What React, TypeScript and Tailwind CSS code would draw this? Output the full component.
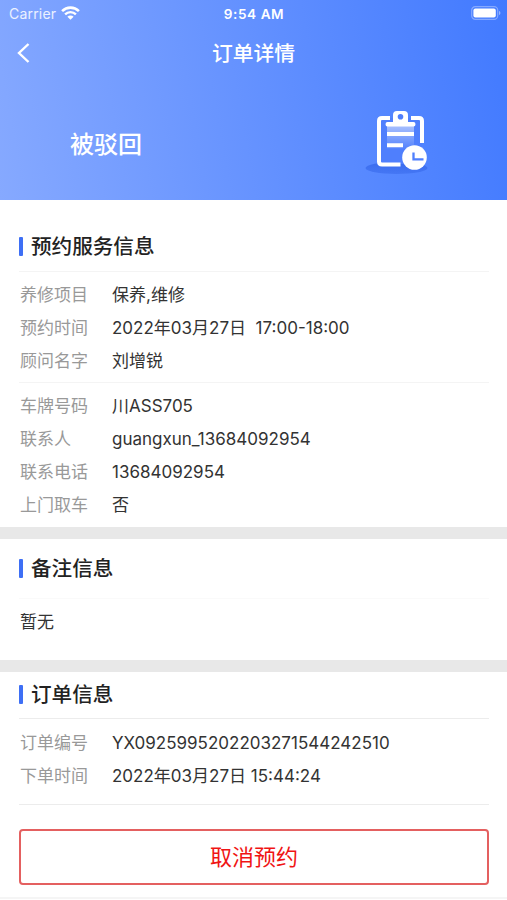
import React from 'react';

interface Row {
  label: string;
  value: string;
}

const serviceRows: Row[] = [
  { label: '养修项目', value: '保养,维修' },
  { label: '预约时间', value: '2022年03月27日  17:00-18:00' },
  { label: '顾问名字', value: '刘增锐' },
];

const contactRows: Row[] = [
  { label: '车牌号码', value: '川ASS705' },
  { label: '联系人', value: 'guangxun_13684092954' },
  { label: '联系电话', value: '13684092954' },
  { label: '上门取车', value: '否' },
];

const orderRows: Row[] = [
  { label: '订单编号', value: 'YX0925995202203271544242510' },
  { label: '下单时间', value: '2022年03月27日 15:44:24' },
];

const SectionTitle: React.FC<{ title: string }> = ({ title }) => (
  <div className="flex h-6 items-center">
    <span className="mr-2 h-[19px] w-1 rounded-[1px] bg-[#3e6ff5]" />
    <h2 className="pt-[2px] text-[20.6px] leading-6 font-medium text-[#222]">{title}</h2>
  </div>
);

const InfoRows: React.FC<{ rows: Row[] }> = ({ rows }) => (
  <dl>
    {rows.map((row) => (
      <div key={row.label} className="flex h-[33px] items-center text-[17px] whitespace-pre">
        <dt className="w-[93px] pl-px text-[#999]">{row.label}</dt>
        <dd className="text-[#333]">{row.value}</dd>
      </div>
    ))}
  </dl>
);

const WifiIcon: React.FC = () => (
  <svg className="ml-[5px] h-[14px] w-[19px] text-white" viewBox="0 0 19 14" fill="none" stroke="currentColor">
    <path d="M1.1 5.1a12 12 0 0 1 16.8 0" strokeWidth="2.6" />
    <path d="M4.1 8.3a7.7 7.7 0 0 1 10.8 0" strokeWidth="2.4" />
    <path d="M9.5 13.8 6.4 10.7a4.4 4.4 0 0 1 6.2 0z" fill="currentColor" stroke="none" />
  </svg>
);

const BatteryIcon: React.FC = () => (
  <svg className="h-[14px] w-[30px]" viewBox="0 0 30 14" fill="none">
    <rect x=".7" y=".7" width="26" height="12.6" rx="3.6" stroke="#fff" strokeOpacity=".35" strokeWidth="1.2" />
    <rect x="2.4" y="2.4" width="22.4" height="9.2" rx="2" fill="#fff" />
    <path d="M28 5v4c.9-.3 1.4-1.1 1.4-2S28.9 5.3 28 5z" fill="#fff" fillOpacity=".45" />
  </svg>
);

const OrderIcon: React.FC = () => (
  <svg className="h-[70px] w-[66px]" viewBox="0 0 66 70" fill="none">
    <defs>
      <linearGradient id="paper" x1="0" y1="0" x2="0" y2="1">
        <stop offset="0" stopColor="#fff" stopOpacity=".5" />
        <stop offset="1" stopColor="#fff" stopOpacity=".02" />
      </linearGradient>
      <linearGradient id="shadow" x1="0" y1="0" x2="0" y2="1">
        <stop offset="0" stopColor="#3a6cee" />
        <stop offset="1" stopColor="#3e70f0" stopOpacity=".7" />
      </linearGradient>
    </defs>
    <ellipse cx="32.5" cy="63" rx="31" ry="6" fill="url(#shadow)" />
    <path d="M15 13h43v32L40 59H15z" fill="#4f7ffd" />
    <path d="M23 21h27v23H23z" fill="url(#paper)" />
    <path d="M26 13h-8q-3 0-3 3v40.5q0 3 3 3h18.5M47 13h8q3 0 3 3v22" stroke="#fff" strokeWidth="4" />
    <path
      d="M29 10q0-4 4-4h7q4 0 4 4v7h5.5q2 0 2 2.3t-2 2.3h-26q-2 0-2-2.3t2-2.3H29z"
      fill="#fff"
    />
    <circle cx="36.5" cy="11.8" r="2.8" fill="#4f7ffd" />
    <path d="M23 29h27M23 40.3h16" stroke="#fff" strokeWidth="4" />
    <circle cx="50.5" cy="52.5" r="12.3" fill="#fff" />
    <path d="M49.5 47.5v6.8h10" stroke="#4f7ffd" strokeWidth="2.3" />
  </svg>
);

const App: React.FC = () => {
  return (
    <div className="h-[900px] overflow-hidden bg-white font-['Inter','Noto_Sans_CJK_SC',sans-serif]">
      <header className="h-[200px] bg-linear-[80deg] from-[#86a9ff] to-[#427aff] text-white">
        <div className="grid h-7 grid-cols-3 items-center pr-[6px] pl-[9px] text-[13px]">
          <div className="flex h-[26px] items-center self-start text-[14px] tracking-[0.2px] text-white/85">
            Carrier
            <WifiIcon />
          </div>
          <span className="-ml-[2px] text-center text-[13.6px] font-semibold tracking-[0.55px]">9:54 AM</span>
          <div className="flex h-[26px] items-center justify-end self-start">
            <BatteryIcon />
          </div>
        </div>
        <div className="grid h-[50px] grid-cols-[40px_1fr_40px] items-center">
          <svg className="ml-[17px] h-5 w-[13px]" viewBox="0 0 13 20" fill="none" stroke="#fff" strokeWidth="2.4">
            <path d="M11.5 1 2 10l9.5 9" />
          </svg>
          <h1 className="pt-[2px] text-center text-[20.8px] leading-none font-medium">订单详情</h1>
        </div>
        <div className="flex items-center justify-between pt-[27px] pr-[77px] pl-[70px]">
          <p className="pt-[9px] text-[24px] leading-none font-medium">被驳回</p>
          <OrderIcon />
        </div>
      </header>

      <section className="pt-[34px] pr-[18px] pl-[19px]">
        <SectionTitle title="预约服务信息" />
        <div className="mt-[13px] border-t border-[#f4f4f4] pt-[7px] pb-[4px]">
          <InfoRows rows={serviceRows} />
        </div>
        <div className="border-t border-[#f4f4f4] pt-[7px] pb-[5px]">
          <InfoRows rows={contactRows} />
        </div>
      </section>

      <section className="border-t-[12px] border-[#e8e8e8] pt-[17px] pr-[18px] pl-[19px]">
        <SectionTitle title="备注信息" />
        <p className="mt-[18px] h-[62px] border-t border-[#fafafa] pt-[11px] pl-px text-[17px] text-[#333]">暂无</p>
      </section>

      <section className="border-t-[12px] border-[#e8e8e8] pt-[10px] pr-[18px] pl-[19px]">
        <SectionTitle title="订单信息" />
        <div className="mt-3 border-y border-[#ececec] pt-[8px] pb-[11px]">
          <InfoRows rows={orderRows} />
        </div>
        <button className="mt-6 block h-14 w-full rounded-[4px] border-2 border-[#e46060] pt-px text-[22px] text-[#f01414]">
          取消预约
        </button>
      </section>
      <div className="mt-[12px] h-[2px] bg-[#f5f5f5]" />
    </div>
  );
};

export default App;
